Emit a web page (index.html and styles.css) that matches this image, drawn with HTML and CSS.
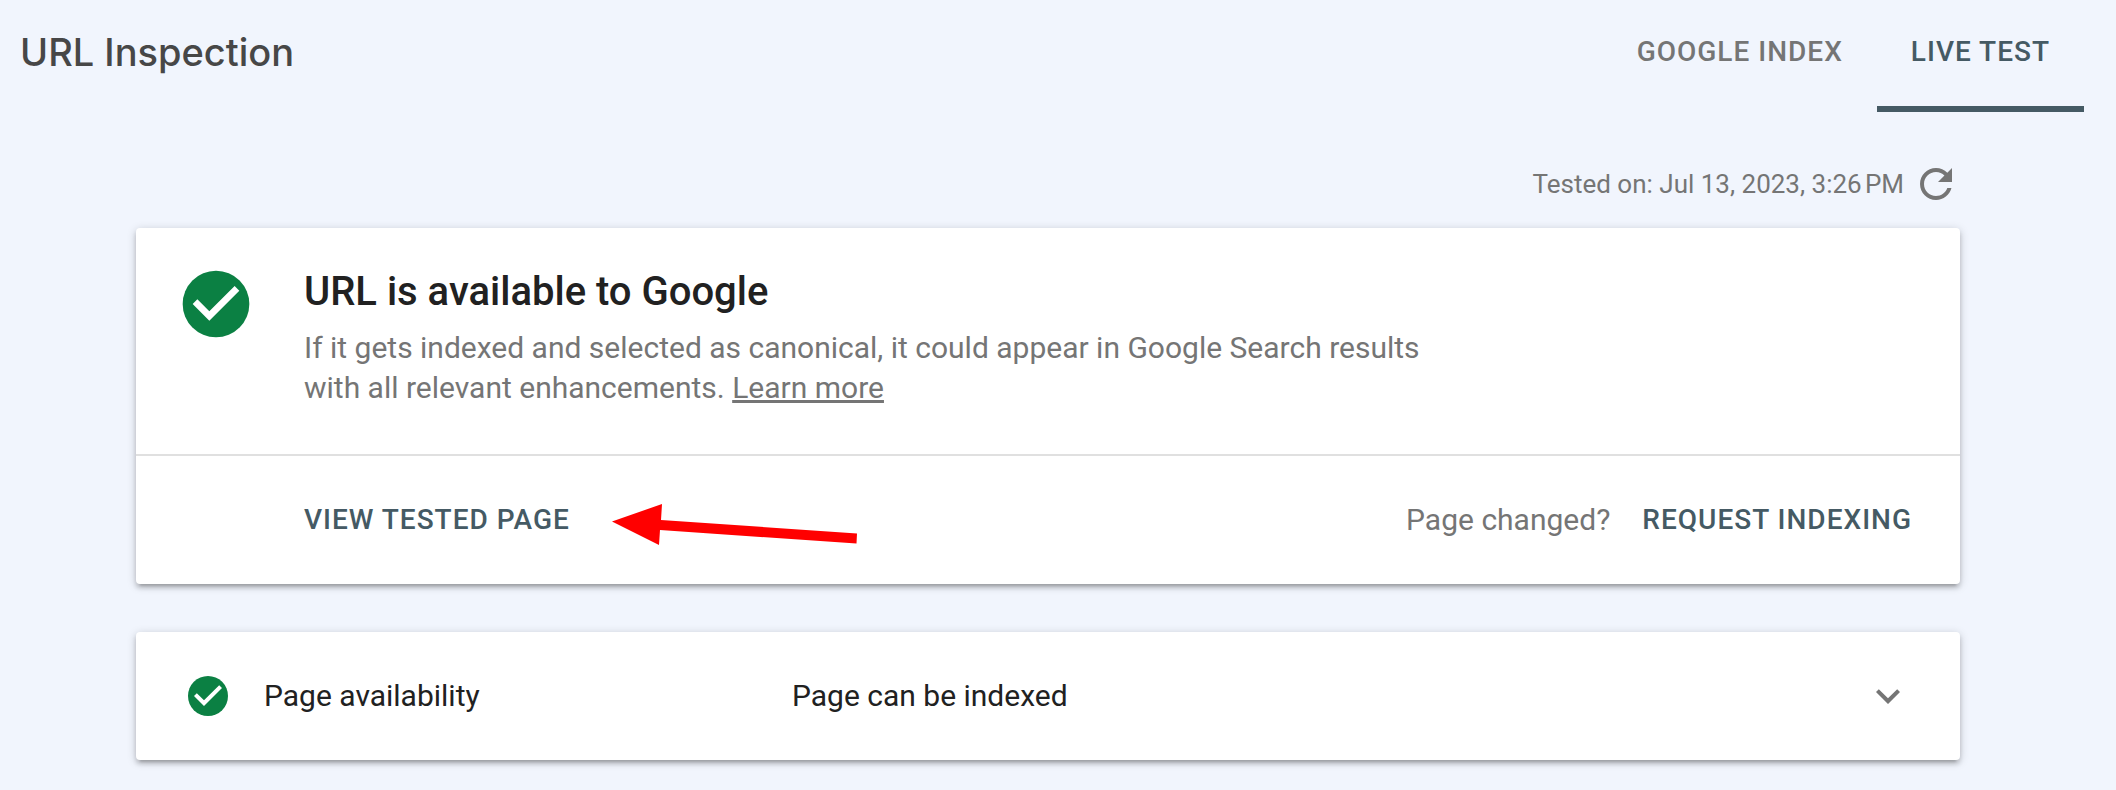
FILE: index.html
```html
<!DOCTYPE html>
<html lang="en">
<head>
<meta charset="utf-8">
<title>URL Inspection</title>
<link rel="stylesheet" href="styles.css">
</head>
<body>
<header class="topbar">
  <h1 class="page-title">URL Inspection</h1>
  <nav class="tabs" role="tablist">
    <button class="tab" type="button" role="tab" aria-selected="false">GOOGLE INDEX</button>
    <button class="tab tab-active" type="button" role="tab" aria-selected="true">LIVE TEST</button>
  </nav>
</header>
<main class="content">
  <div class="tested">
    <span>Tested on: Jul 13, 2023, 3:26&#8239;PM</span>
    <button class="icon-button" type="button" aria-label="Run test again">
      <svg class="icon" viewBox="0 0 24 24" aria-hidden="true"><path d="M17.65 6.35C16.2 4.9 14.21 4 12 4c-4.42 0-7.99 3.58-7.99 8s3.57 8 7.99 8c3.73 0 6.84-2.55 7.73-6h-2.08c-.82 2.33-3.04 4-5.65 4-3.31 0-6-2.69-6-6s2.69-6 6-6c1.66 0 3.14.69 4.22 1.78L13 11h7V4l-2.35 2.35z"/></svg>
    </button>
  </div>
  <section class="card verdict">
    <div class="summary">
      <svg class="icon icon-large icon-ok" viewBox="0 0 24 24" aria-hidden="true"><circle cx="12" cy="12" r="10"/><path class="tick" d="M10 17l-5-5 1.41-1.41L10 14.17l7.59-7.59L19 8l-9 9z"/></svg>
      <div class="summary-text">
        <h2 class="summary-title">URL is available to Google</h2>
        <p class="summary-body">If it gets indexed and selected as canonical, it could appear in Google Search results with all relevant enhancements. <a class="link" href="#">Learn more</a></p>
      </div>
    </div>
    <div class="actions">
      <button class="action" type="button">VIEW TESTED PAGE</button>
      <svg class="arrow" viewBox="0 0 246 42" aria-hidden="true"><path d="M0 17.500 50 0 49 16 245 29.500 244.500 39.500 48 26 47 41z"/></svg>
      <span class="hint">Page changed?</span>
      <button class="action" type="button">REQUEST INDEXING</button>
    </div>
  </section>
  <section class="card row">
    <svg class="icon icon-ok" viewBox="0 0 24 24" aria-hidden="true"><circle cx="12" cy="12" r="10"/><path class="tick" d="M10 17l-5-5 1.410-1.410L10 14.170l7.590-7.590L19 8l-9 9z"/></svg>
    <span class="row-name">Page availability</span>
    <span class="row-value">Page can be indexed</span>
    <button class="icon-button" type="button" aria-label="Expand">
      <svg class="icon" viewBox="0 0 24 24" aria-hidden="true"><path d="M16.590 8.590 12 13.170 7.410 8.590 6 10l6 6 6-6z"/></svg>
    </button>
  </section>
</main>
</body>
</html>
```
FILE: styles.css
```css
* { box-sizing: border-box; }
body {
  margin: 0;
  background: #f1f5fd;
  color: #212121;
  font-family: Roboto, "Liberation Sans", sans-serif;
  font-size: 30px;
  line-height: 40px;
}
h1, h2, p { margin: 0; }
button {
  margin: 0;
  padding: 0;
  border: 0;
  background: none;
  font-family: inherit;
  color: inherit;
  cursor: pointer;
}
.topbar {
  display: flex;
  justify-content: space-between;
  padding: 0 32px 0 20px;
}
.page-title {
  padding-top: 28px;
  color: #474747;
  font-family: Inter, sans-serif;
  font-size: 38px;
  font-weight: 500;
  line-height: 48px;
}
.tabs { display: flex; }
.tab {
  height: 112px;
  padding: 0 34px 4px;
  border-bottom: 6px solid transparent;
  color: #757575;
  font-size: 28px;
  font-weight: 500;
  letter-spacing: 1px;
}
.tab-active {
  border-color: #455a64;
  color: #455a64;
}
.content { padding: 48px 156px 28px 136px; }
.tested {
  display: flex;
  align-items: center;
  justify-content: flex-end;
  gap: 8px;
  margin-bottom: 20px;
  color: #757575;
  font-size: 26px;
}
.icon-button { display: flex; color: #757575; }
.icon {
  flex: none;
  width: 48px;
  height: 48px;
  fill: currentColor;
}
.icon-large { width: 80px; height: 80px; }
.icon-ok { color: #0b8043; }
.tick { fill: #fff; }
.card {
  border-radius: 4px;
  background: #fff;
  box-shadow: 0 4px 4px rgba(0, 0, 0, .14), 0 6px 2px -4px rgba(0, 0, 0, .12), 0 2px 10px rgba(0, 0, 0, .2);
}
.summary {
  display: flex;
  gap: 48px;
  padding: 36px 40px 46px;
}
.summary-title {
  padding-bottom: 8px;
  font-size: 40px;
  font-weight: 500;
  line-height: 56px;
}
.summary-body { max-width: 1140px; color: #757575; }
.link { color: inherit; text-decoration-thickness: 3px; }
.actions {
  display: flex;
  align-items: center;
  min-height: 130px;
  padding: 0 48px 0 168px;
  border-top: 2px solid #e0e0e0;
}
.action {
  color: #455a64;
  font-size: 28px;
  font-weight: 500;
  line-height: 40px;
  letter-spacing: 1px;
}
.arrow {
  width: 246px;
  height: 42px;
  margin: 10px 0 0 42px;
  fill: #f00;
}
.hint { margin: 0 32px 0 auto; color: #757575; }
.row {
  display: flex;
  align-items: center;
  min-height: 128px;
  margin-top: 48px;
  padding: 0 48px;
}
.row-name { flex: none; width: 528px; margin-left: 32px; }
.row-value { flex: 1; }
```
